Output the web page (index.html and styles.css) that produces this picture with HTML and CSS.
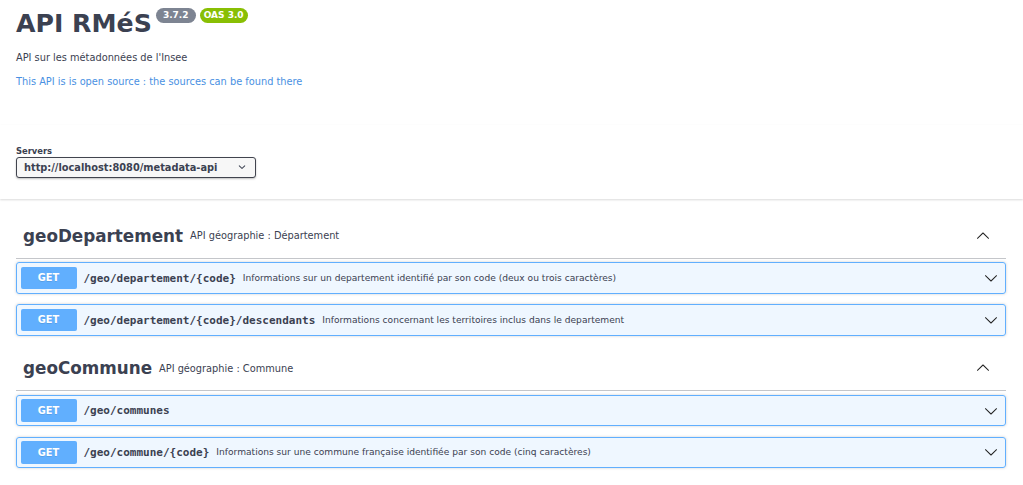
FILE: index.html
```html
<!DOCTYPE html>
<html lang="fr">
<head>
<meta charset="utf-8">
<title>API RMéS</title>
<link rel="stylesheet" href="styles.css">
</head>
<body>
<div class="info wrap">
  <div class="title-row">
    <h2 class="title">API RMéS</h2>
    <span class="badge badge-version"> 3.7.2 </span>
    <span class="badge badge-oas">OAS 3.0</span>
  </div>
  <p class="desc">API sur les métadonnées de l'Insee</p>
  <p class="desc desc-link"><a class="link" href="#">This API is is open source : the sources can be found there</a></p>
</div>

<div class="scheme">
  <div class="wrap">
    <div class="servers-title">Servers</div>
    <div class="select">
      <span>http://localhost:8080/metadata-api</span>
      <svg class="select-arrow" viewBox="0 0 20 20" width="14" height="14"><path d="M13.418 7.859a.695.695 0 0 1 .978 0 .68.68 0 0 1 0 .969l-3.908 3.83a.697.697 0 0 1-.979 0l-3.908-3.830a.68.68 0 0 1 0-.969.695.695 0 0 1 .978 0L10 11l3.418-3.141z"/></svg>
    </div>
  </div>
</div>

<div class="wrap ops">
  <section class="tag-section">
    <h3 class="tag">
      <span class="tag-name">geoDepartement</span>
      <small class="tag-desc">API géographie : Département</small>
      <svg class="tag-arrow" viewBox="0 0 20 20" width="14" height="14"><path d="M17.418 13.891c.272.268.709.268.979 0s.271-.701 0-.969l-7.908-7.83c-.27-.268-.707-.268-.979 0l-7.908 7.83c-.27.268-.27.701 0 .969.271.268.709.268.979 0L10 6.75l7.418 7.141z"/></svg>
    </h3>
    <div class="opblock">
      <div class="summary">
        <span class="method">GET</span>
        <span class="path">/geo/departement/{code}</span>
        <span class="op-desc">Informations sur un departement identifié par son code (deux ou trois caractères)</span>
        <svg class="op-arrow" viewBox="0 0 20 20" width="14" height="14"><path d="M17.418 6.109c.272-.268.709-.268.979 0s.271.701 0 .969l-7.908 7.83c-.27.268-.707.268-.979 0l-7.908-7.83c-.27-.268-.27-.701 0-.969.271-.268.709-.268.979 0L10 13.25l7.418-7.141z"/></svg>
      </div>
    </div>
    <div class="opblock">
      <div class="summary">
        <span class="method">GET</span>
        <span class="path">/geo/departement/{code}/descendants</span>
        <span class="op-desc">Informations concernant les territoires inclus dans le departement</span>
        <svg class="op-arrow" viewBox="0 0 20 20" width="14" height="14"><path d="M17.418 6.109c.272-.268.709-.268.979 0s.271.701 0 .969l-7.908 7.83c-.27.268-.707.268-.979 0l-7.908-7.83c-.27-.268-.27-.701 0-.969.271-.268.709-.268.979 0L10 13.25l7.418-7.141z"/></svg>
      </div>
    </div>
  </section>

  <section class="tag-section">
    <h3 class="tag">
      <span class="tag-name">geoCommune</span>
      <small class="tag-desc">API géographie : Commune</small>
      <svg class="tag-arrow" viewBox="0 0 20 20" width="14" height="14"><path d="M17.418 13.891c.272.268.709.268.979 0s.271-.701 0-.969l-7.908-7.83c-.27-.268-.707-.268-.979 0l-7.908 7.83c-.27.268-.27.701 0 .969.271.268.709.268.979 0L10 6.75l7.418 7.141z"/></svg>
    </h3>
    <div class="opblock">
      <div class="summary">
        <span class="method">GET</span>
        <span class="path">/geo/communes</span>
        <span class="op-desc"></span>
        <svg class="op-arrow" viewBox="0 0 20 20" width="14" height="14"><path d="M17.418 6.109c.272-.268.709-.268.979 0s.271.701 0 .969l-7.908 7.83c-.27.268-.707.268-.979 0l-7.908-7.83c-.27-.268-.27-.701 0-.969.271-.268.709-.268.979 0L10 13.25l7.418-7.141z"/></svg>
      </div>
    </div>
    <div class="opblock">
      <div class="summary">
        <span class="method">GET</span>
        <span class="path">/geo/commune/{code}</span>
        <span class="op-desc">Informations sur une commune française identifiée par son code (cinq caractères)</span>
        <svg class="op-arrow" viewBox="0 0 20 20" width="14" height="14"><path d="M17.418 6.109c.272-.268.709-.268.979 0s.271.701 0 .969l-7.908 7.83c-.27.268-.707.268-.979 0l-7.908-7.83c-.27-.268-.27-.701 0-.969.271-.268.709-.268.979 0L10 13.25l7.418-7.141z"/></svg>
      </div>
    </div>
  </section>
</div>
</body>
</html>
```

FILE: styles.css
```css
* {
  box-sizing: border-box;
}

html,
body {
  margin: 0;
  background: #fff;
}

body {
  font-family: "DejaVu Sans", sans-serif;
  color: #3b4151;
}

.wrap {
  padding: 0 17px 0 16px;
}

/* ---------- info ---------- */
.info {
  padding-top: 9px;
}

.title-row {
  display: flex;
  align-items: flex-start;
}

.title {
  margin: 0;
  font-size: 25.2px;
  line-height: 29px;
  font-weight: 700;
  color: #3b4151;
}

.badge {
  margin: -1px 0 0 4px;
  padding: 2px 4px;
  border-radius: 57px;
  font-size: 9px;
  line-height: 11px;
  font-weight: 700;
  color: #fff;
  white-space: pre;
}

.badge-version {
  background: #7d8492;
}

.badge-oas {
  background: #89bf04;
}

.desc {
  margin: 12.6px 0 0;
  font-size: 9.8px;
  line-height: 14px;
}

.desc-link {
  margin-top: 10px;
}

.link {
  color: #4990e2;
  text-decoration: none;
}

/* ---------- servers ---------- */
.scheme {
  margin-top: 36px;
  padding: 21px 0;
  background: #fff;
  box-shadow: 0 1px 2px 0 rgba(0, 0, 0, 0.15);
}

.servers-title {
  font-size: 8.4px;
  line-height: 10px;
  font-weight: 700;
}

.select {
  margin-top: 1.4px;
  width: 240px;
  height: 21px;
  display: flex;
  align-items: center;
  justify-content: space-between;
  padding: 0 6px 0 7px;
  border: 1px solid #41444e;
  border-radius: 3px;
  background: #f7f7f7;
  box-shadow: 0 1px 2px 0 rgba(0, 0, 0, 0.25);
  font-size: 9.8px;
  font-weight: 700;
}

.select-arrow {
  fill: #3b4151;
  flex: none;
}

/* ---------- operations ---------- */
.ops {
  margin-top: 15px;
}

.tag-section {
  margin-bottom: 1.5px;
}

.tag {
  display: flex;
  align-items: center;
  height: 45px;
  margin: 0 0 3.5px;
  padding: 0 16px 0 7px;
  border-bottom: 1px solid rgba(59, 65, 81, 0.3);
  font-size: 16.8px;
  font-weight: 700;
}

.tag-desc {
  flex: 1;
  padding: 0 7px;
  font-size: 9.8px;
  font-weight: 400;
}

.tag-arrow {
  flex: none;
  fill: #222;
}

.opblock {
  margin-bottom: 10.5px;
  border: 1px solid #61affe;
  border-radius: 3px;
  background: rgba(97, 175, 254, 0.1);
  box-shadow: 0 0 3px rgba(0, 0, 0, 0.19);
}

.summary {
  display: flex;
  align-items: center;
  padding: 3.5px;
}

.method {
  flex: none;
  min-width: 56px;
  padding: 5.5px 0;
  border-radius: 2px;
  background: #61affe;
  color: #fff;
  font-size: 9.8px;
  line-height: 11.4px;
  font-weight: 700;
  text-align: center;
  text-shadow: 0 1px 0 rgba(0, 0, 0, 0.1);
}

.path {
  flex: none;
  padding: 0 7px;
  font-family: "DejaVu Sans Mono", monospace;
  font-size: 11px;
  font-weight: 700;
  color: #3b4151;
}

.op-desc {
  flex: 1;
  font-size: 9.1px;
  color: #3b4151;
}

.op-arrow {
  flex: none;
  margin-right: 3.5px;
  fill: #222;
}
```
